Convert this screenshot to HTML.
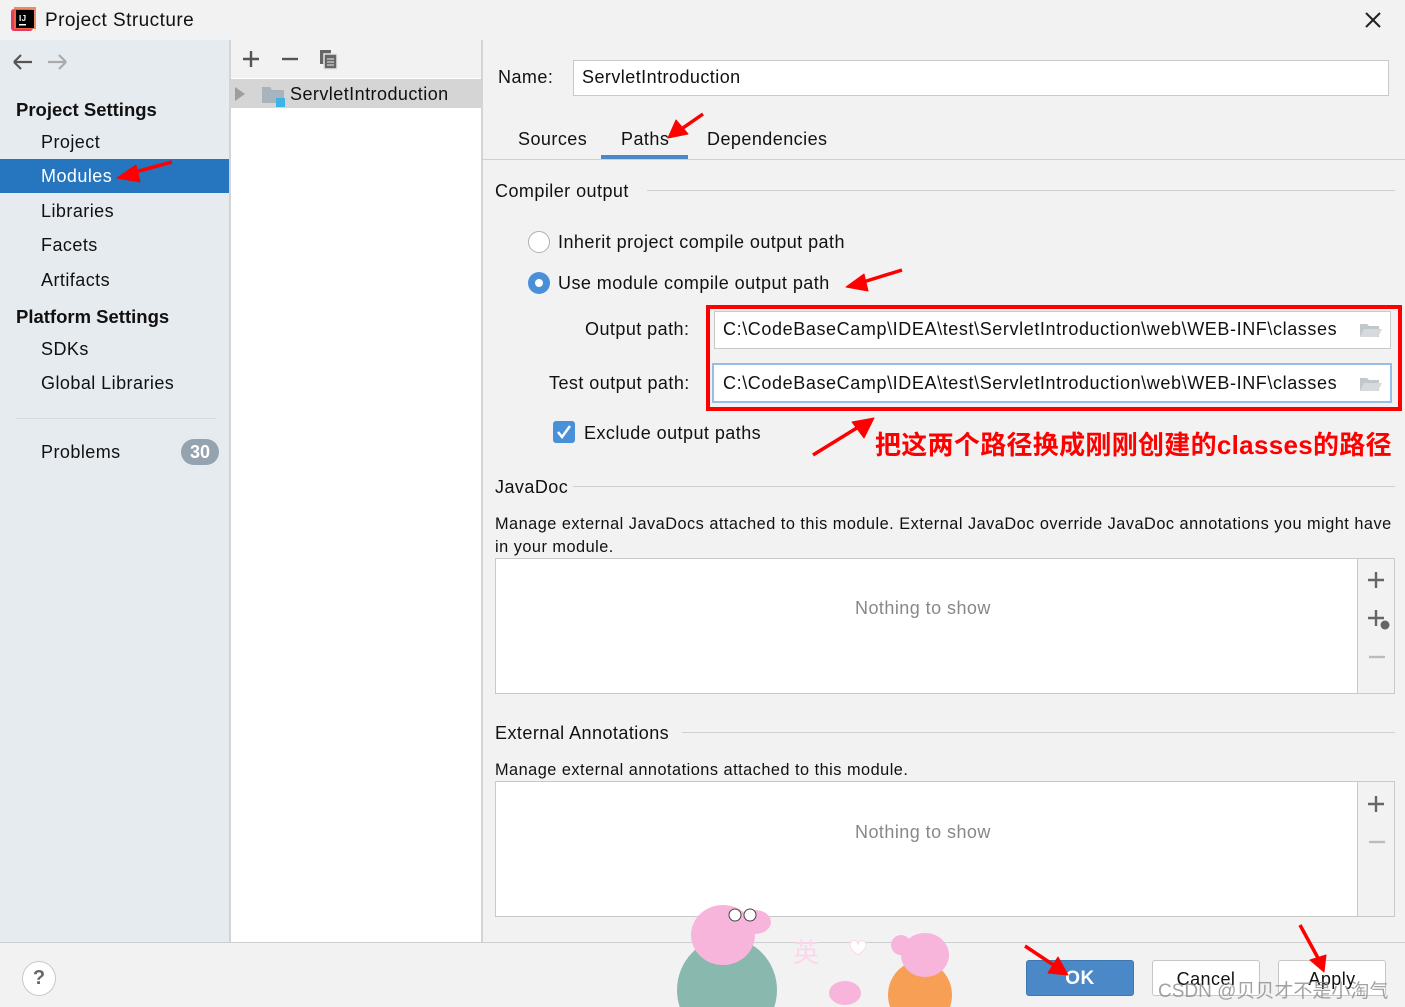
<!DOCTYPE html>
<html><head><meta charset="utf-8"><style>
*{margin:0;padding:0;box-sizing:border-box}
body{width:1405px;height:1007px;overflow:hidden;background:#f2f2f2;font-family:"Liberation Sans","Noto Sans CJK SC",sans-serif;color:#111;position:relative;font-size:18px;letter-spacing:.45px}
.a{position:absolute;white-space:nowrap}
.line{position:absolute;height:1px;background:#d0d0d0}
.box{position:absolute;background:#fff;border:1px solid #c9c9c9}
</style></head><body>
<div class="a" style="left:0;top:0;width:1405px;height:40px;background:#f2f2f2"></div>
<svg class="a" style="left:11px;top:7px" width="26" height="26"><rect x="0" y="2" width="22" height="22" rx="3" fill="#e8396b"/><rect x="3" y="0" width="22" height="22" fill="#f0703a" opacity=".8"/><rect x="5" y="3" width="18" height="18" fill="#000"/><text x="8" y="14" font-size="8" fill="#fff" font-weight="bold" font-family="Liberation Sans">IJ</text><rect x="8" y="17" width="7" height="1.5" fill="#fff"/></svg>
<div class="a" style="left:45px;top:10px;font-size:19px">Project Structure</div>
<svg class="a" style="left:1364px;top:11px" width="18" height="18"><path d="M2 2L16 16M16 2L2 16" stroke="#222" stroke-width="2"/></svg>

<div class="a" style="left:0;top:40px;width:230px;height:902px;background:#e6ebf0"></div>
<svg class="a" style="left:12px;top:52px" width="64" height="20"><path d="M2 10H20M2 10L9 3M2 10L9 17" stroke="#555" stroke-width="2.2" fill="none"/><path d="M54 10H36M54 10L47 3M54 10L47 17" stroke="#aaa" stroke-width="2.2" fill="none"/></svg>
<div class="a" style="left:16px;top:99px;font-weight:bold;font-size:18.5px;letter-spacing:0">Project Settings</div>
<div class="a" style="left:41px;top:132px">Project</div>
<div class="a" style="left:0;top:159px;width:229px;height:34px;background:#2675bf"></div>
<div class="a" style="left:41px;top:166px;color:#fff">Modules</div>
<div class="a" style="left:41px;top:201px">Libraries</div>
<div class="a" style="left:41px;top:235px">Facets</div>
<div class="a" style="left:41px;top:270px">Artifacts</div>
<div class="a" style="left:16px;top:306px;font-weight:bold;font-size:18.5px;letter-spacing:0">Platform Settings</div>
<div class="a" style="left:41px;top:339px">SDKs</div>
<div class="a" style="left:41px;top:373px">Global Libraries</div>
<div class="line" style="left:16px;top:418px;width:200px;background:#d8dce0"></div>
<div class="a" style="left:41px;top:442px">Problems</div>
<div class="a" style="left:181px;top:439px;width:38px;height:26px;border-radius:13px;background:#95a2b0;color:#fff;font-weight:bold;text-align:center;line-height:26px;letter-spacing:0">30</div>
<div class="a" style="left:229px;top:40px;width:2px;height:902px;background:#d4d4d4"></div>

<div class="a" style="left:231px;top:78px;width:250px;height:864px;background:#fff"></div>
<svg class="a" style="left:240px;top:47px" width="110" height="24"><path d="M11 4V20M3 12H19" stroke="#555" stroke-width="2.4"/><path d="M42 12H58" stroke="#555" stroke-width="2.4"/><rect x="80" y="3" width="11" height="14" fill="#666"/><rect x="84" y="7" width="13" height="15" fill="#666" stroke="#e6e6e6" stroke-width="1.5"/><path d="M87 12H94M87 15H94M87 18H94" stroke="#eee" stroke-width="1"/></svg>
<div class="a" style="left:231px;top:79px;width:250px;height:29px;background:#d5d5d5"></div>
<svg class="a" style="left:234px;top:85px" width="60" height="22"><path d="M1 2L11 9L1 16Z" fill="#9e9e9e"/><path d="M28 2H36L38 5H50V18H28Z" fill="#a7b4bd"/><rect x="42" y="13" width="9" height="9" fill="#3db4e3"/></svg>
<div class="a" style="left:290px;top:84px">ServletIntroduction</div>
<div class="a" style="left:481px;top:40px;width:2px;height:902px;background:#d4d4d4"></div>

<div class="a" style="left:498px;top:67px">Name:</div>
<div class="box" style="left:573px;top:60px;width:816px;height:36px"></div>
<div class="a" style="left:582px;top:67px">ServletIntroduction</div>
<div class="a" style="left:518px;top:129px">Sources</div>
<div class="a" style="left:621px;top:129px">Paths</div>
<div class="a" style="left:707px;top:129px">Dependencies</div>
<div class="a" style="left:601px;top:155px;width:87px;height:4px;background:#4a88c7"></div>
<div class="line" style="left:483px;top:159px;width:922px"></div>

<div class="a" style="left:495px;top:181px">Compiler output</div>
<div class="line" style="left:647px;top:190px;width:748px"></div>
<div class="a" style="left:528px;top:231px;width:22px;height:22px;border-radius:50%;background:#fff;border:1.5px solid #b0b0b0"></div>
<div class="a" style="left:558px;top:232px">Inherit project compile output path</div>
<div class="a" style="left:528px;top:272px;width:22px;height:22px;border-radius:50%;background:#4a90d9"></div>
<div class="a" style="left:535px;top:279px;width:8px;height:8px;border-radius:50%;background:#fff"></div>
<div class="a" style="left:558px;top:273px">Use module compile output path</div>
<div class="a" style="left:585px;top:319px">Output path:</div>
<div class="box" style="left:714px;top:311px;width:677px;height:38px"></div>
<div class="a" style="left:723px;top:319px;letter-spacing:.6px">C:\CodeBaseCamp\IDEA\test\ServletIntroduction\web\WEB-INF\classes</div>
<div class="a" style="left:549px;top:373px">Test output path:</div>
<div class="box" style="left:712px;top:363px;width:680px;height:40px;border:2px solid #97bde6"></div>
<div class="a" style="left:723px;top:373px;letter-spacing:.6px">C:\CodeBaseCamp\IDEA\test\ServletIntroduction\web\WEB-INF\classes</div>
<svg class="a" style="left:1359px;top:320px" width="24" height="20"><path d="M1 4H8L10 6H20V17H1Z" fill="#c2c7cc"/><path d="M1 17L5 9H23L19 17Z" fill="#d6dadd"/></svg>
<svg class="a" style="left:1359px;top:374px" width="24" height="20"><path d="M1 4H8L10 6H20V17H1Z" fill="#c2c7cc"/><path d="M1 17L5 9H23L19 17Z" fill="#d6dadd"/></svg>
<div class="a" style="left:706px;top:305px;width:696px;height:106px;border:4px solid #f00"></div>
<div class="a" style="left:553px;top:421px;width:22px;height:22px;border-radius:3px;background:#4a90d9"></div>
<svg class="a" style="left:553px;top:421px" width="22" height="22"><path d="M5 11L9 16L17 5" stroke="#fff" stroke-width="2.5" fill="none"/></svg>
<div class="a" style="left:584px;top:423px">Exclude output paths</div>
<div class="a" style="left:875px;top:425px;font-size:26px;color:#f00;font-weight:bold;letter-spacing:.3px">把这两个路径换成刚刚创建的classes的路径</div>

<div class="a" style="left:495px;top:477px">JavaDoc</div>
<div class="line" style="left:573px;top:486px;width:822px"></div>
<div class="a" style="left:495px;top:515px;font-size:16.3px;letter-spacing:.5px">Manage external JavaDocs attached to this module. External JavaDoc override JavaDoc annotations you might have</div>
<div class="a" style="left:495px;top:538px;font-size:16.3px;letter-spacing:.5px">in your module.</div>
<div class="box" style="left:495px;top:558px;width:900px;height:136px"></div>
<div class="a" style="left:1357px;top:559px;width:37px;height:134px;background:#f2f2f2;border-left:1px solid #c9c9c9"></div>
<div class="a" style="left:855px;top:598px;color:#888">Nothing to show</div>
<svg class="a" style="left:1366px;top:568px" width="26" height="100"><path d="M10 4V20M2 12H18" stroke="#666" stroke-width="2.4"/><path d="M10 42V58M2 50H18" stroke="#666" stroke-width="2.4"/><circle cx="19" cy="57" r="4.5" fill="#666"/><path d="M3 89H19" stroke="#bbb" stroke-width="2.4"/></svg>

<div class="a" style="left:495px;top:723px">External Annotations</div>
<div class="line" style="left:682px;top:732px;width:713px"></div>
<div class="a" style="left:495px;top:761px;font-size:16.3px;letter-spacing:.5px">Manage external annotations attached to this module.</div>
<div class="box" style="left:495px;top:781px;width:900px;height:136px"></div>
<div class="a" style="left:1357px;top:782px;width:37px;height:134px;background:#f2f2f2;border-left:1px solid #c9c9c9"></div>
<div class="a" style="left:855px;top:822px;color:#888">Nothing to show</div>
<svg class="a" style="left:1366px;top:792px" width="26" height="60"><path d="M10 4V20M2 12H18" stroke="#666" stroke-width="2.4"/><path d="M3 50H19" stroke="#bbb" stroke-width="2.4"/></svg>

<div class="line" style="left:0;top:942px;width:1405px;background:#cfcfcf"></div>
<div class="a" style="left:22px;top:961px;width:34px;height:35px;border-radius:50%;background:#fff;border:1px solid #c8c8c8;text-align:center;line-height:33px;font-weight:bold;color:#666;font-size:20px;letter-spacing:0">?</div>
<svg class="a" style="left:665px;top:890px" width="310" height="117">
<ellipse cx="62" cy="100" rx="50" ry="52" fill="#88b8ae"/>
<ellipse cx="58" cy="45" rx="32" ry="30" fill="#f7b5dc"/>
<ellipse cx="90" cy="32" rx="16" ry="12" fill="#f7b5dc"/>
<circle cx="70" cy="25" r="6" fill="#fff" stroke="#444"/><circle cx="85" cy="25" r="6" fill="#fff" stroke="#444"/>
<ellipse cx="255" cy="105" rx="32" ry="34" fill="#f79f55"/>
<ellipse cx="260" cy="65" rx="24" ry="22" fill="#f7b5dc"/>
<ellipse cx="236" cy="55" rx="10" ry="10" fill="#f7b5dc"/>
<ellipse cx="180" cy="103" rx="16" ry="12" fill="#f7b5dc"/>
<text x="128" y="72" font-size="26" fill="#fcd6ea">英</text>
<path d="M185 55c0-6 8-6 8 0c0-6 8-6 8 0c0 5-8 10-8 10c0 0-8-5-8-10z" fill="#fff" stroke="#fcd6ea"/>
</svg>
<div class="a" style="left:1026px;top:960px;width:108px;height:36px;border-radius:3px;background:#4a88c7;border:1px solid #3f77b0;color:#fff;font-weight:bold;text-align:center;line-height:36px;font-size:19px">OK</div>
<div class="a" style="left:1152px;top:960px;width:108px;height:36px;border-radius:3px;background:#fff;border:1px solid #c6c6c6;text-align:center;line-height:36px">Cancel</div>
<div class="a" style="left:1278px;top:960px;width:108px;height:36px;border-radius:3px;background:#fff;border:1px solid #c6c6c6;text-align:center;line-height:36px">Apply</div>
<div class="a" style="left:1158px;top:976px;font-size:19px;color:rgba(140,140,140,.8);letter-spacing:0">CSDN @贝贝才不是小淘气</div>

<svg class="a" style="left:0;top:0" width="1405" height="1007">
<g fill="#f00" stroke="#f00" stroke-linejoin="round">
<path d="M172 162L128 174" stroke-width="3.5"/><path d="M117 178L136 165L140 182Z"/>
<path d="M703 114L680 130" stroke-width="3.5"/><path d="M668 138L676 120L688 134Z"/>
<path d="M902 270L860 283" stroke-width="3.5"/><path d="M846 287L864 274L868 291Z"/>
<path d="M813 455L860 426" stroke-width="3.5"/><path d="M874 418L864 438L852 422Z"/>
<path d="M1025 946L1055 966" stroke-width="3.5"/><path d="M1068 975L1048 973L1058 957Z"/>
<path d="M1300 925L1318 958" stroke-width="3.5"/><path d="M1324 972L1310 960L1326 955Z"/>
</g>
</svg>
</body></html>
